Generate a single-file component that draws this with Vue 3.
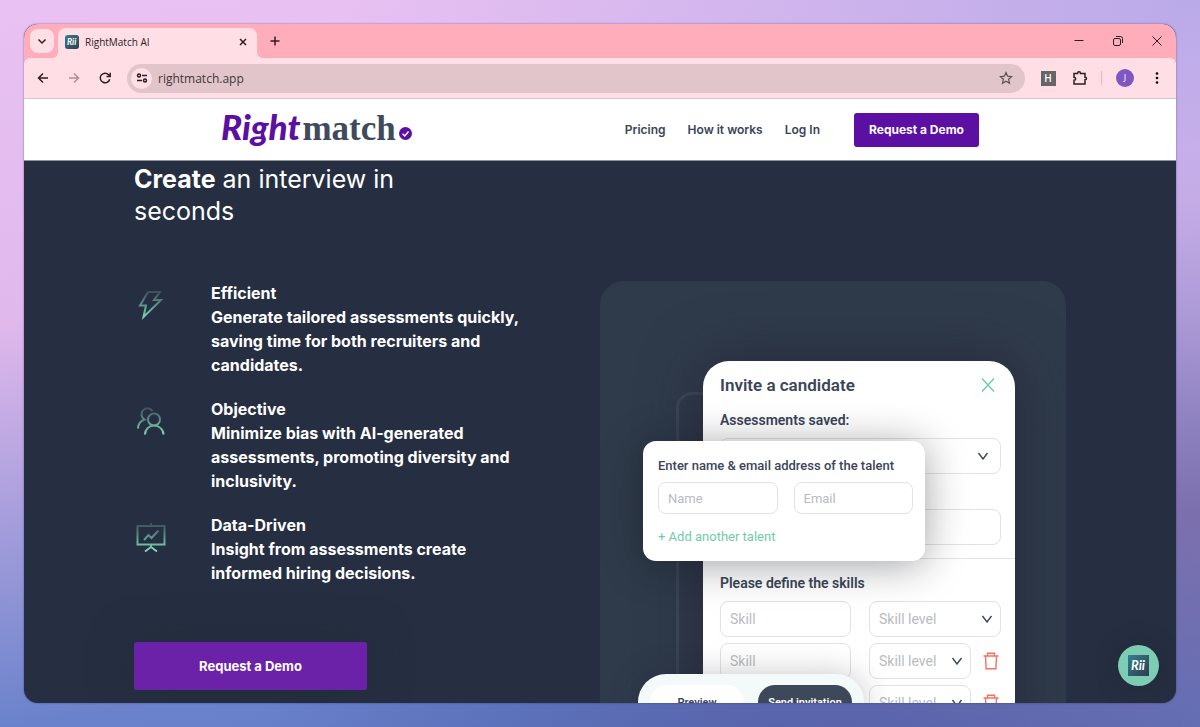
<template>
    <div class="desktop">
        <div class="window">
            <div class="tab-strip">
                <button class="tab-search" type="button" aria-label="Search tabs">
                    <svg viewBox="0 0 12 12" width="12" height="12"><path d="M2.5 4.5 6 8l3.5-3.5" /></svg>
                </button>
                <div class="tab">
                    <svg class="favicon" viewBox="0 0 21 21" width="14" height="14">
                        <rect width="21" height="21" rx="4" fill="url(#brand)" />
                        <text x="10" y="15" class="brand-text">Rii</text>
                    </svg>
                    <span class="tab-title">RightMatch AI</span>
                    <button class="tab-close" type="button" aria-label="Close tab">
                        <svg viewBox="0 0 12 12" width="12" height="12"><path d="m3 3 6 6M9 3 3 9" /></svg>
                    </button>
                </div>
                <button class="new-tab" type="button" aria-label="New tab">
                    <svg viewBox="0 0 12 12" width="12" height="12"><path d="M6 1.5v9M1.5 6h9" /></svg>
                </button>
                <div class="window-controls">
                    <button type="button" aria-label="Minimize">
                        <svg viewBox="0 0 12 12" width="12" height="12"><path d="M1.5 5.5h9" /></svg>
                    </button>
                    <button type="button" aria-label="Restore">
                        <svg viewBox="0 0 12 12" width="12" height="12">
                            <rect x="1.5" y="3.5" width="7" height="7" rx="1.5" />
                            <path d="M4 1.5h4.500a2 2 0 0 1 2 2V8" />
                        </svg>
                    </button>
                    <button type="button" aria-label="Close window">
                        <svg viewBox="0 0 12 12" width="12" height="12"><path d="m1.5 1.5 9 9M10.5 1.5l-9 9" /></svg>
                    </button>
                </div>
            </div>

            <div class="toolbar">
                <div class="history">
                    <button class="tool" type="button" aria-label="Back">
                        <svg viewBox="0 0 14 14" width="14" height="14"><path d="M12 7H2.5M7 2.5 2.5 7 7 11.5" /></svg>
                    </button>
                    <button class="tool muted" type="button" aria-label="Forward">
                        <svg viewBox="0 0 14 14" width="14" height="14"><path d="M2 7h9.5M7 2.5 11.5 7 7 11.5" /></svg>
                    </button>
                    <button class="tool" type="button" aria-label="Reload">
                        <svg viewBox="0 0 14 14" width="14" height="14">
                            <path d="M11.7 8.200A4.800 4.800 0 1 1 10.600 3.700L12 5.200" />
                            <path d="M12.200 1.800v3.700H8.500" />
                        </svg>
                    </button>
                </div>
                <div class="omnibox">
                    <button class="site-info" type="button" aria-label="View site information">
                        <svg viewBox="0 0 12 12" width="12" height="12">
                            <circle cx="3" cy="3.5" r="1.5" /><path d="M6 3.5h5" />
                            <circle cx="9" cy="8.5" r="1.5" /><path d="M1 8.5h5" />
                        </svg>
                    </button>
                    <input class="address" type="text" value="rightmatch.app" aria-label="Address bar">
                    <button class="tool star" type="button" aria-label="Bookmark this page">
                        <svg viewBox="0 0 14 14" width="14" height="14">
                            <path d="m7 1.5 1.6 3.700 4 .4-3 2.700.9 4L7 10.200l-3.500 2.100.9-4-3-2.700 4-.4z" />
                        </svg>
                    </button>
                </div>
                <button class="tool" type="button" aria-label="Extension"><span class="ext">H</span></button>
                <button class="tool" type="button" aria-label="Extensions">
                    <svg viewBox="0 0 16 16" width="16" height="16">
                        <path d="M2 3.5h3.500c0-2.300 3-2.300 3 0H13v3.700c2 0 2 2.600 0 2.600V14H2v-3.700c2.200 0 2.200-3.100 0-3.100z" />
                    </svg>
                </button>
                <span class="divider"></span>
                <button class="tool" type="button" aria-label="Profile"><span class="avatar">J</span></button>
                <button class="tool" type="button" aria-label="Menu">
                    <svg viewBox="0 0 14 14" width="14" height="14" class="dots">
                        <circle cx="7" cy="2.5" r="1.3" /><circle cx="7" cy="7" r="1.3" /><circle cx="7" cy="11.5" r="1.3" />
                    </svg>
                </button>
            </div>

            <header class="site-header">
                <div class="header-inner">
                    <a class="logo" href="#" aria-label="Rightmatch">
                        <span class="logo-right">Right</span><span class="logo-match">match</span>
                        <svg viewBox="0 0 12 12" width="13" height="13">
                            <circle cx="6" cy="6" r="6" fill="#5b0fa3" />
                            <path d="m3.3 6.200 2 2 3.500-4" fill="none" stroke="#fff" stroke-width="1.3" />
                        </svg>
                    </a>
                    <nav class="nav">
                        <a v-for="link in links" :key="link" href="#">{{ link }}</a>
                    </nav>
                    <button class="btn-demo" type="button">Request a Demo</button>
                </div>
            </header>

            <main class="hero">
                <div class="hero-inner">
                    <h1><strong>Create</strong> an interview in seconds</h1>
                    <div class="columns">
                        <section class="pitch">
                            <ul class="features">
                                <li v-for="feature in features" :key="feature.title">
                                    <svg class="feature-icon" viewBox="0 0 32 32" width="32" height="32">
                                        <path v-for="d in feature.paths" :key="d" :d="d" />
                                    </svg>
                                    <div>
                                        <h2>{{ feature.title }}</h2>
                                        <p>{{ feature.text }}</p>
                                    </div>
                                </li>
                            </ul>
                            <button class="btn-cta" type="button">Request a Demo</button>
                        </section>

                        <section class="panel">
                            <div class="outline"></div>
                            <form class="modal" @submit.prevent>
                                <div class="modal-head">
                                    <h3>Invite a candidate</h3>
                                    <button class="icon-btn" type="button" aria-label="Close">
                                        <svg viewBox="0 0 14 16" width="14" height="16"><path d="m1 1.5 12 13M13 1.5l-12 13" stroke="#6fcbaa" /></svg>
                                    </button>
                                </div>
                                <label class="label" for="saved">Assessments saved:</label>
                                <div class="select saved">
                                    <select id="saved"><option></option></select>
                                    <svg viewBox="0 0 12 8" width="12" height="8"><path d="m1.5 1 4.500 6 4.500-6" /></svg>
                                </div>
                                <input class="field email" type="text" aria-label="Talent">
                                <hr>
                                <h4>Please define the skills</h4>
                                <div v-for="n in 3" :key="n" class="skill-row">
                                    <input class="field" type="text" placeholder="Skill" :aria-label="`Skill ${n}`">
                                    <div class="level">
                                        <div class="select">
                                            <select :aria-label="`Skill level ${n}`"><option>Skill level</option></select>
                                            <svg viewBox="0 0 12 8" width="12" height="8"><path d="m1.5 1 4.500 6 4.500-6" /></svg>
                                        </div>
                                        <button v-if="n > 1" class="icon-btn" type="button" aria-label="Remove skill">
                                            <svg viewBox="0 0 16 18" width="16" height="18">
                                                <path d="M.5 4h15M4.500 4V1.300h7V4M2.500 4l.6 12.700h9.800L13.500 4" stroke="#f5705f" />
                                            </svg>
                                        </button>
                                    </div>
                                </div>
                            </form>

                            <form class="talent" @submit.prevent>
                                <h4>Enter name &amp; email address of the talent</h4>
                                <div class="talent-fields">
                                    <input class="field" type="text" placeholder="Name" aria-label="Name">
                                    <input class="field" type="email" placeholder="Email" aria-label="Email">
                                </div>
                                <a href="#">+ Add another talent</a>
                            </form>

                            <div class="actions">
                                <button type="button">Preview</button>
                                <button class="send" type="button">Send invitation</button>
                            </div>
                        </section>
                    </div>
                </div>
            </main>

            <button class="chat" type="button" aria-label="Open chat">
                <svg viewBox="0 0 21 21" width="21" height="21">
                    <rect width="21" height="21" fill="url(#brand)" />
                    <text x="10" y="15" class="brand-text">Rii</text>
                </svg>
            </button>
        </div>

        <svg class="defs" width="0" height="0" aria-hidden="true">
            <linearGradient id="brand" x1="0" y1="0" x2="1" y2="1">
                <stop offset="0" stop-color="#35808f" />
                <stop offset="1" stop-color="#2f3b50" />
            </linearGradient>
            <linearGradient id="mint" gradientUnits="userSpaceOnUse" x1="0" y1="1" x2="0" y2="29">
                <stop offset="0" stop-color="#3b4656" />
                <stop offset="1" stop-color="#7dd6b8" />
            </linearGradient>
        </svg>
    </div>
</template>

<script setup>
const links = ['Pricing', 'How it works', 'Log In'];

const features = [
    {
        title: 'Efficient',
        text: 'Generate tailored assessments quickly, saving time for both recruiters and candidates.',
        paths: ['M14 3h12l-6 8h7L9.500 28l2.500-11.500H6z']
    },
    {
        title: 'Objective',
        text: 'Minimize bias with AI-generated assessments, promoting diversity and inclusivity.',
        paths: [
            'M18.500 6A6 6 0 1 0 10.500 14.500C6.500 16 4 19 4 23.500',
            'M26 14.500a6 6 0 1 1-12 0 6 6 0 0 1 12 0z',
            'M11 29.500c0-5 4-9 9-9s9.500 4 9.500 9'
        ]
    },
    {
        title: 'Data-Driven',
        text: 'Insight from assessments create informed hiring decisions.',
        paths: ['M3.500 5h27v18.500h-27zM17 5V2M17 24v3M11 30.500l6-4.500 6 4.500', 'M10 19l4.500-5 3 3 7-7.500']
    }
];
</script>

<style>
body {
    margin: 0;
}
</style>

<style scoped>
* {
    box-sizing: border-box;
}

.desktop {
    height: 100vh;
    padding: 24px;
    background:
        radial-gradient(ellipse at 100% 0, rgba(182, 168, 232, 0.9) 0%, rgba(182, 168, 232, 0) 50%),
        radial-gradient(ellipse at 105% 70%, rgba(125, 105, 165, 0.8) 0%, rgba(125, 105, 165, 0) 50%),
        radial-gradient(ellipse at 70% 110%, rgba(76, 92, 165, 0.9) 0%, rgba(76, 92, 165, 0) 50%),
        linear-gradient(174deg, #e9c2f3 0%, #e0b8ec 38%, #6a82cb 85%, #5f7ac4 100%);
    font-family: Inter, sans-serif;
}

.window {
    position: relative;
    display: flex;
    flex-direction: column;
    height: 100%;
    overflow: hidden;
    border-radius: 14px;
    background: #262e41;
    box-shadow: 0 0 2px rgba(40, 30, 80, 0.6);
}

button {
    display: flex;
    align-items: center;
    justify-content: center;
    padding: 0;
    border: 0;
    background: none;
    color: inherit;
    font-family: inherit;
    cursor: pointer;
}

.defs {
    position: absolute;
}

.brand-text {
    fill: #fff;
    font: italic 700 13px Lato, sans-serif;
    text-anchor: middle;
}

/* browser chrome */
.tab-strip,
.toolbar {
    display: flex;
    flex: none;
    align-items: center;
    font-family: "Open Sans", sans-serif;
    color: #2b2024;
}

.tab-strip svg:not(.favicon),
.toolbar svg:not(.dots) {
    fill: none;
    stroke: currentColor;
    stroke-width: 1.5;
}

.tab-strip {
    height: 34px;
    padding-left: 6px;
    background: #ffadbb;
}

.tab-search {
    width: 24px;
    height: 24px;
    border-radius: 8px;
    background: #ffdfe5;
}

.tab {
    position: relative;
    display: flex;
    align-items: center;
    align-self: flex-end;
    gap: 6px;
    width: 199px;
    height: 30px;
    margin-left: 4px;
    padding: 0 8px 2px 7px;
    border-radius: 8px 8px 0 0;
    background: #ffdfe5;
}

.tab::before,
.tab::after {
    content: "";
    position: absolute;
    bottom: 0;
    width: 6px;
    height: 6px;
}

.tab::before {
    left: -6px;
    background: radial-gradient(circle at 0 0, transparent 6px, #ffdfe5 6px);
}

.tab::after {
    right: -6px;
    background: radial-gradient(circle at 100% 0, transparent 6px, #ffdfe5 6px);
}

.tab-title {
    flex: 1;
    font-size: 10px;
}

.new-tab {
    margin-left: 12px;
}

.window-controls {
    display: flex;
    margin-left: auto;
}

.window-controls button {
    width: 39px;
    height: 34px;
}

.tab-strip .window-controls svg {
    stroke-width: 1;
}

.toolbar {
    position: relative;
    gap: 10px;
    height: 41px;
    padding: 0 8px;
    border-bottom: 1px solid #dcc3ca;
    background: #ffdfe5;
}

/* rounded shoulders between the tab strip and the toolbar */
.toolbar::before,
.toolbar::after {
    content: "";
    position: absolute;
    top: 0;
    width: 6px;
    height: 6px;
}

.toolbar::before {
    left: 0;
    background: radial-gradient(circle at 100% 100%, transparent 6px, #ffadbb 6px);
}

.toolbar::after {
    right: 0;
    background: radial-gradient(circle at 0 100%, transparent 6px, #ffadbb 6px);
}

.history {
    display: flex;
    gap: 9px;
    margin-right: 1px;
}

.tool {
    flex: none;
    width: 22px;
    height: 22px;
}

.muted {
    color: #b08e96;
}

.omnibox {
    display: flex;
    flex: 1;
    align-items: center;
    height: 29px;
    margin-right: 2px;
    padding: 0 8px 0 4px;
    border-radius: 15px;
    background: #e1c5ca;
}

.site-info {
    flex: none;
    width: 21px;
    height: 21px;
    border-radius: 50%;
    background: #ffdfe5;
}

.address {
    flex: 1;
    min-width: 0;
    padding: 0 6px;
    border: 0;
    outline: 0;
    background: none;
    color: #43363a;
    font: 12px "Open Sans", sans-serif;
}

.star {
    color: #5e5054;
}

.toolbar .star svg {
    stroke-width: 1.2;
}

.ext {
    width: 15px;
    background: #666;
    color: #fff;
    font-size: 10px;
    font-weight: 600;
    line-height: 15px;
}

.divider {
    width: 1px;
    height: 14px;
    margin-right: 2px;
    background: #ffadbb;
}

.avatar {
    width: 18px;
    border-radius: 50%;
    background: #7e57c2;
    color: #fff;
    font-size: 9px;
    line-height: 18px;
}

/* site header */
.site-header {
    flex: none;
    border-bottom: 1px solid #8e959f;
    background: #fff;
    color: #3a4557;
}

.header-inner {
    display: flex;
    align-items: center;
    max-width: 758px;
    height: 61px;
    margin: 0 auto;
}

.logo {
    display: flex;
    align-items: baseline;
    padding-bottom: 5px;
    line-height: 36px;
    text-decoration: none;
}

.logo-right {
    color: #5b0fa3;
    font: italic 900 35px/36px Lato, sans-serif;
}

.logo-match {
    margin: 0 3px 0 2px;
    color: #3f4a5c;
    font: 700 35px/36px "Liberation Serif", serif;
}

.nav {
    display: flex;
    gap: 22px;
    margin-left: auto;
}

.nav a {
    color: #3a4557;
    font-size: 12px;
    font-weight: 600;
    text-decoration: none;
}

.btn-demo {
    width: 125px;
    height: 34px;
    margin-left: 34px;
    border-radius: 3px;
    background: #5b0fa3;
    color: #fff;
    font-size: 12px;
    font-weight: 700;
}

/* hero */
.hero {
    flex: 1;
    min-height: 0;
    overflow: hidden;
    color: #fff;
}

.hero-inner {
    max-width: 932px;
    margin: 0 auto;
    padding-top: 2px;
}

h1 {
    max-width: 300px;
    margin: 0 0 54px;
    font-size: 25px;
    font-weight: 400;
    line-height: 32px;
}

.columns {
    display: grid;
    grid-template-columns: 1fr 1fr;
    align-items: start;
}

.features {
    display: flex;
    flex-direction: column;
    gap: 20px;
    margin: 0 0 57px;
    padding: 0;
    list-style: none;
}

.features li {
    display: flex;
    gap: 45px;
    padding-right: 68px;
}

.feature-icon {
    flex: none;
    margin-top: 8px;
    fill: none;
    stroke: url(#mint);
    stroke-width: 2;
}

h2,
.features p {
    margin: 0;
    font-size: 16px;
    font-weight: 700;
    line-height: 24px;
}

.btn-cta {
    width: 233px;
    height: 48px;
    border-radius: 3px;
    background: #6b21a8;
    box-shadow: 0 0 40px rgba(35, 45, 58, 0.8);
    color: #fff;
    font-size: 13px;
    font-weight: 700;
}

/* product preview */
.panel {
    position: relative;
    overflow: hidden;
    padding: 80px 51px 0 103px;
    border-radius: 24px 24px 0 0;
    background: #2f3b4b;
    font-family: Roboto, sans-serif;
}

.outline {
    position: absolute;
    top: 111px;
    left: 76px;
    width: 60px;
    height: 500px;
    border: 3px solid #3d4859;
    border-radius: 16px;
}

.modal {
    position: relative;
    padding: 13px 14px 24px 17px;
    border-radius: 26px 26px 0 0;
    background: #fff;
    box-shadow: 0 0 60px rgba(38, 34, 54, 0.75);
    color: #3a4557;
}

.modal-head {
    display: flex;
    align-items: center;
    justify-content: space-between;
    padding-right: 6px;
}

h3,
h4 {
    margin: 0;
    font-weight: 600;
}

h3 {
    font-size: 17px;
    line-height: 22px;
}

.label {
    display: block;
    margin: 13px 0 7px;
    font-size: 14px;
    font-weight: 600;
    line-height: 22px;
}

.modal svg {
    fill: none;
    stroke: #3a4557;
    stroke-width: 1.4;
}

.field,
select {
    width: 100%;
    min-width: 0;
    height: 36px;
    padding: 0 9px;
    border: 1px solid #e2e2e4;
    border-radius: 8px;
    outline: 0;
    background: transparent;
    color: #b9bbbf;
    font: 14px Roboto, sans-serif;
}

.field::placeholder {
    color: #b9bbbf;
    opacity: 1;
}

select {
    display: block;
    appearance: none;
}

.select {
    position: relative;
    flex: 1;
}

.select svg {
    position: absolute;
    top: 14px;
    right: 8px;
    pointer-events: none;
}

.saved svg {
    right: 12px;
}

.email {
    display: block;
    margin-top: 35px;
}

hr {
    height: 1px;
    margin: 13px -14px 14px -17px;
    border: 0;
    background: #e2e2e4;
}

.modal h4 {
    margin-bottom: 8px;
    font-size: 14px;
    line-height: 20px;
}

.skill-row {
    display: grid;
    grid-template-columns: 131fr 132fr;
    gap: 18px;
    margin-bottom: 6px;
}

.level {
    display: flex;
    align-items: center;
    gap: 12px;
}

.level .icon-btn {
    margin-right: 2px;
}

.talent {
    position: absolute;
    top: 160px;
    left: 43px;
    width: 282px;
    height: 120px;
    padding: 15px 12px 0 15px;
    border-radius: 13px;
    background: #fff;
    box-shadow: 0 4px 40px rgba(20, 22, 30, 0.4);
    color: #3a4557;
}

.talent h4 {
    font-size: 13px;
    font-weight: 500;
    line-height: 20px;
}

.talent-fields {
    display: flex;
    gap: 16px;
    margin: 6px 0 12px;
}

.talent .field {
    height: 32px;
    font-size: 13px;
}

.talent a {
    color: #6fcbaa;
    font-size: 13px;
    line-height: 20px;
    text-decoration: none;
}

.actions {
    position: absolute;
    top: 393px;
    left: 38px;
    display: flex;
    gap: 14px;
    width: 226px;
    padding: 11px 12px;
    border-radius: 28px;
    background: #f4f9f9;
    box-shadow: 0 0 30px rgba(30, 32, 45, 0.25);
}

.actions button {
    flex: 1;
    height: 34px;
    border-radius: 17px;
    background: #fff;
    color: #3a4557;
    font-size: 11px;
    font-weight: 600;
    white-space: nowrap;
}

.actions .send {
    background: #3d485a;
    color: #fff;
}

.chat {
    position: absolute;
    right: 17px;
    bottom: 17px;
    width: 41px;
    height: 41px;
    border-radius: 50%;
    background: #7ccdb3;
    box-shadow: 0 0 20px rgba(30, 42, 52, 0.7);
}
</style>
